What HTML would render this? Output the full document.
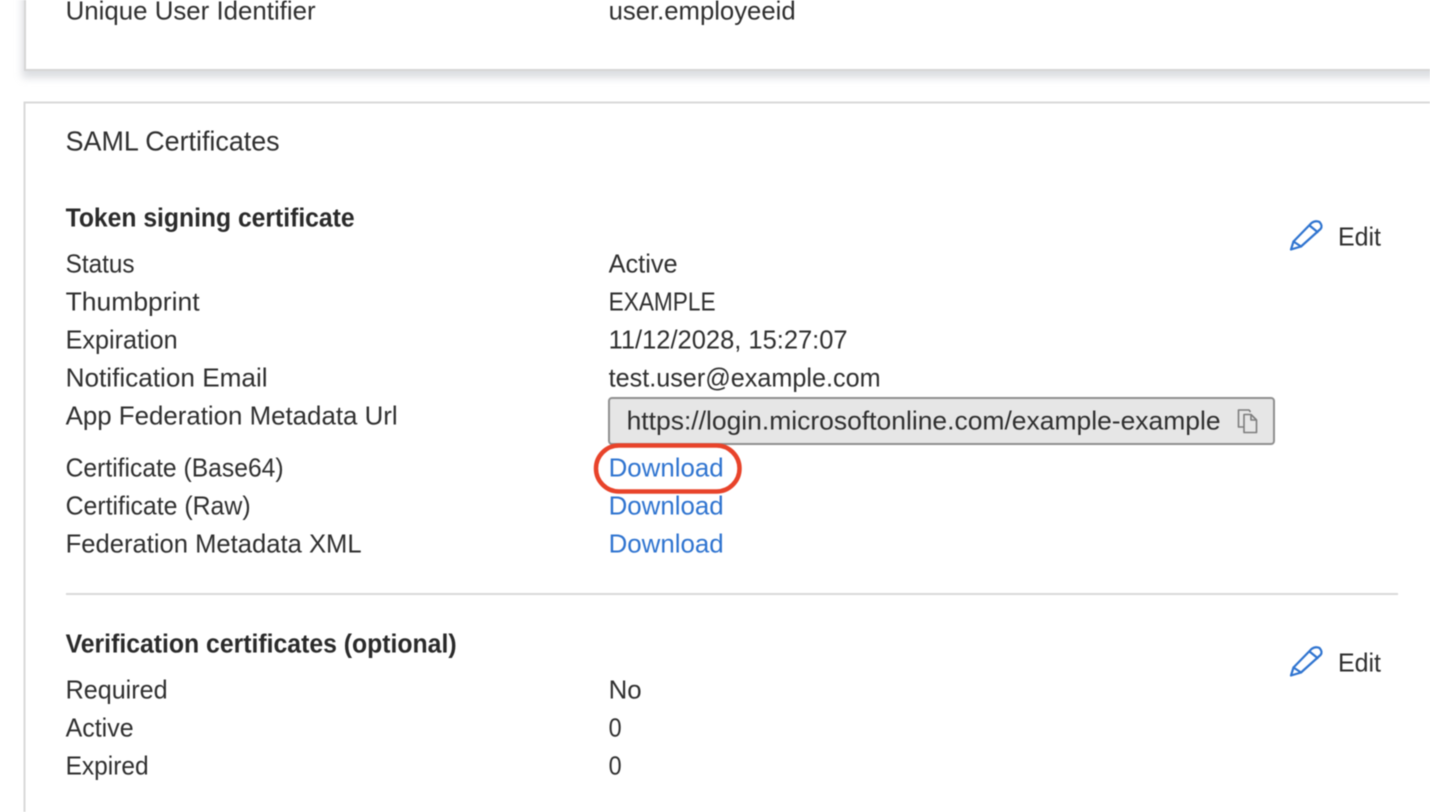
<!DOCTYPE html>
<html><head><meta charset="utf-8"><style>
html,body{margin:0;padding:0;background:#fff;width:1430px;height:812px;overflow:hidden}
svg{position:absolute;left:0;top:0;display:block;filter:blur(.4px)}
text{font-family:"Liberation Sans",sans-serif;font-size:26px;fill:#2f2f2f}
.b{font-weight:bold;fill:#2a2a2a;font-size:25.500px}
.l{fill:#2f74d0}
</style></head><body>
<svg width="1430" height="812" viewBox="0 0 1430 812" xmlns="http://www.w3.org/2000/svg">
<defs><filter id="s" x="-5%" y="-30%" width="110%" height="160%"><feGaussianBlur stdDeviation="4"/></filter></defs>
<rect x="22" y="-20" width="1430" height="98" fill="#c9ccd1" opacity=".65" filter="url(#s)"/>
<rect x="25" y="-10" width="1420" height="80" fill="#fff" stroke="#d6d6d6" stroke-width="2"/>
<rect x="24.500" y="102.500" width="1420" height="730" fill="#fff" stroke="#d9d9d9" stroke-width="2"/>

<g transform="translate(-.4 -.5)">
<text x="66" y="20" textLength="250" lengthAdjust="spacingAndGlyphs">Unique User Identifier</text>
<text x="609" y="20" textLength="187" lengthAdjust="spacingAndGlyphs">user.employeeid</text>
<text x="66" y="151" textLength="214" lengthAdjust="spacingAndGlyphs" style="font-size:28px">SAML Certificates</text>
<text class="b" x="66" y="227" textLength="289" lengthAdjust="spacingAndGlyphs">Token signing certificate</text>

<text x="66" y="273" textLength="69" lengthAdjust="spacingAndGlyphs">Status</text>
<text x="609" y="273" textLength="69" lengthAdjust="spacingAndGlyphs">Active</text>
<text x="66" y="311" textLength="134" lengthAdjust="spacingAndGlyphs">Thumbprint</text>
<text x="609" y="311" textLength="107" lengthAdjust="spacingAndGlyphs">EXAMPLE</text>
<text x="66" y="349" textLength="112" lengthAdjust="spacingAndGlyphs">Expiration</text>
<text x="609" y="349" textLength="239" lengthAdjust="spacingAndGlyphs">11/12/2028, 15:27:07</text>
<text x="66" y="387" textLength="202" lengthAdjust="spacingAndGlyphs">Notification Email</text>
<text x="609" y="387" textLength="272" lengthAdjust="spacingAndGlyphs">test.user@example.com</text>
<text x="66" y="425" textLength="332" lengthAdjust="spacingAndGlyphs">App Federation Metadata Url</text>
</g>

<rect x="609" y="398" width="665" height="46" rx="3" fill="#e6e6e6" stroke="#8f8f8f" stroke-width="2"/>
<text x="626.600" y="429.500" textLength="594" lengthAdjust="spacingAndGlyphs">https://login.microsoftonline.com/example-example</text>
<g fill="none" stroke="#7d7d7d" stroke-width="1.600" stroke-linejoin="round">
<path d="M1244 427H1238.500V410H1249L1250.500 412"/>
<path d="M1244 414.500H1251L1256.500 420V432.500H1244Z" fill="#e6e6e6"/>
<path d="M1251 414.500V420H1256.500"/>
</g>

<g transform="translate(-.4 -.5)">
<text x="66" y="477" textLength="218" lengthAdjust="spacingAndGlyphs">Certificate (Base64)</text>
<text class="l" x="609" y="477" textLength="115" lengthAdjust="spacingAndGlyphs">Download</text>
<text x="66" y="515" textLength="185" lengthAdjust="spacingAndGlyphs">Certificate (Raw)</text>
<text class="l" x="609" y="515" textLength="115" lengthAdjust="spacingAndGlyphs">Download</text>
<text x="66" y="553" textLength="296" lengthAdjust="spacingAndGlyphs">Federation Metadata XML</text>
<text class="l" x="609" y="553" textLength="115" lengthAdjust="spacingAndGlyphs">Download</text>
</g>
<rect x="596" y="445.500" width="143.500" height="46" rx="23" fill="none" stroke="#e8432a" stroke-width="4.500"/>

<g fill="none" stroke="#2f74d0" stroke-width="2.200" stroke-linejoin="round" stroke-linecap="round">
<path d="M1291 249.500L1293.500 241.500L1311.500 223Q1315.500 220 1319.500 222Q1323 226 1320.500 229L1301 246.500Z"/>
<path d="M1293.500 241.500L1301 246.500M1309.500 225.500L1317.500 232"/>
</g>
<text x="1338" y="245.500" textLength="43" lengthAdjust="spacingAndGlyphs">Edit</text>

<rect x="66" y="593" width="1332" height="2" fill="#d9d9d9"/>

<g transform="translate(-.4 -.5)">
<text class="b" x="66" y="653" textLength="391" lengthAdjust="spacingAndGlyphs">Verification certificates (optional)</text>
<text x="66" y="699" textLength="102" lengthAdjust="spacingAndGlyphs">Required</text>
<text x="609" y="699" textLength="33" lengthAdjust="spacingAndGlyphs">No</text>
<text x="66" y="737" textLength="68" lengthAdjust="spacingAndGlyphs">Active</text>
<text x="609" y="737" textLength="13" lengthAdjust="spacingAndGlyphs">0</text>
<text x="66" y="775" textLength="83" lengthAdjust="spacingAndGlyphs">Expired</text>
<text x="609" y="775" textLength="13" lengthAdjust="spacingAndGlyphs">0</text>
</g>
<g fill="none" stroke="#2f74d0" stroke-width="2.200" stroke-linejoin="round" stroke-linecap="round" transform="translate(0 426)">
<path d="M1291 249.500L1293.500 241.500L1311.500 223Q1315.500 220 1319.500 222Q1323 226 1320.500 229L1301 246.500Z"/>
<path d="M1293.500 241.500L1301 246.500M1309.500 225.500L1317.500 232"/>
</g>
<text x="1338" y="671.500" textLength="43" lengthAdjust="spacingAndGlyphs">Edit</text>
</svg>
</body></html>
